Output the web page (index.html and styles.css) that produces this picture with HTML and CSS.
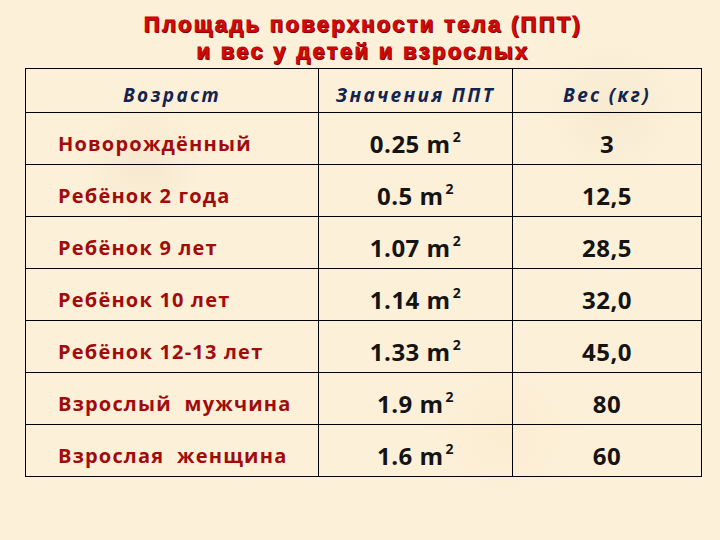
FILE: index.html
```html
<!DOCTYPE html>
<html lang="ru">
<head>
<meta charset="utf-8">
<link rel="stylesheet" href="styles.css">
</head>
<body>
<div class="slide">
  <h1 class="title">Площадь поверхности тела (ППТ)<br>и вес у детей и взрослых</h1>
  <table class="data">
    <colgroup><col class="c1"><col class="c2"><col class="c3"></colgroup>
    <thead>
      <tr><th>Возраст</th><th>Значения ППТ</th><th>Вес (кг)</th></tr>
    </thead>
    <tbody>
      <tr><td class="lbl">Новорождённый</td><td class="val">0.25 m<sup>2</sup></td><td class="val">3</td></tr>
      <tr><td class="lbl">Ребёнок 2 года</td><td class="val">0.5 m<sup>2</sup></td><td class="val">12,5</td></tr>
      <tr><td class="lbl">Ребёнок 9 лет</td><td class="val">1.07 m<sup>2</sup></td><td class="val">28,5</td></tr>
      <tr><td class="lbl">Ребёнок 10 лет</td><td class="val">1.14 m<sup>2</sup></td><td class="val">32,0</td></tr>
      <tr><td class="lbl">Ребёнок 12-13 лет</td><td class="val">1.33 m<sup>2</sup></td><td class="val">45,0</td></tr>
      <tr><td class="lbl">Взрослый&nbsp; мужчина</td><td class="val">1.9 m<sup>2</sup></td><td class="val">80</td></tr>
      <tr><td class="lbl">Взрослая&nbsp; женщина</td><td class="val">1.6 m<sup>2</sup></td><td class="val">60</td></tr>
    </tbody>
  </table>
</div>
</body>
</html>
```
FILE: styles.css
```css
html, body {
  margin: 0;
  padding: 0;
}
body {
  width: 720px;
  height: 540px;
  overflow: hidden;
  background-color: #fcf0d9;
  background-image:
    radial-gradient(circle at 20% 30%, rgba(240,225,195,0.5) 0, rgba(240,225,195,0) 60px),
    radial-gradient(circle at 70% 80%, rgba(250,235,205,0.6) 0, rgba(250,235,205,0) 80px),
    radial-gradient(circle at 85% 20%, rgba(242,228,200,0.5) 0, rgba(242,228,200,0) 70px);
}
.slide {
  padding: 11px 0 0 25px;
}
.title {
  width: 676px;
  margin: 0;
  text-align: center;
  font-family: "Liberation Sans", Arial, sans-serif;
  font-weight: 900;
  font-size: 22px;
  line-height: 27px;
  letter-spacing: 2.3px;
  color: #d40b0b;
  text-shadow: 1px 1px 0 #5a0000;
  -webkit-text-stroke: 0.8px #c00000;
}
.data {
  margin-top: 3px;
  width: 676px;
  border-collapse: collapse;
  table-layout: fixed;
  font-family: "Open Sans", "Noto Sans", sans-serif;
}
.c1 { width: 293px; }
.c2 { width: 194px; }
.c3 { width: 189px; }
.data th, .data td {
  border: 1.5px solid #000;
  padding: 0;
  vertical-align: middle;
}
.data th {
  height: 44px;
  padding-top: 8px;
  box-sizing: border-box;
  font-style: italic;
  font-weight: 700;
  font-size: 19px;
  letter-spacing: 2.3px;
  color: #14244f;
  text-align: center;
}
.data td {
  height: 52px;
  padding-top: 9px;
  box-sizing: border-box;
}
.lbl {
  padding-left: 32px !important;
  font-weight: 700;
  font-size: 20px;
  letter-spacing: 1.2px;
  color: #a10b0b;
  text-align: left;
  white-space: nowrap;
}
.val {
  text-align: center;
  font-weight: 700;
  font-size: 24px;
  letter-spacing: 0.5px;
  color: #141414;
}
.val sup {
  font-size: 14px;
  margin-left: 2px;
  vertical-align: 11px;
  line-height: 0;
}
```
